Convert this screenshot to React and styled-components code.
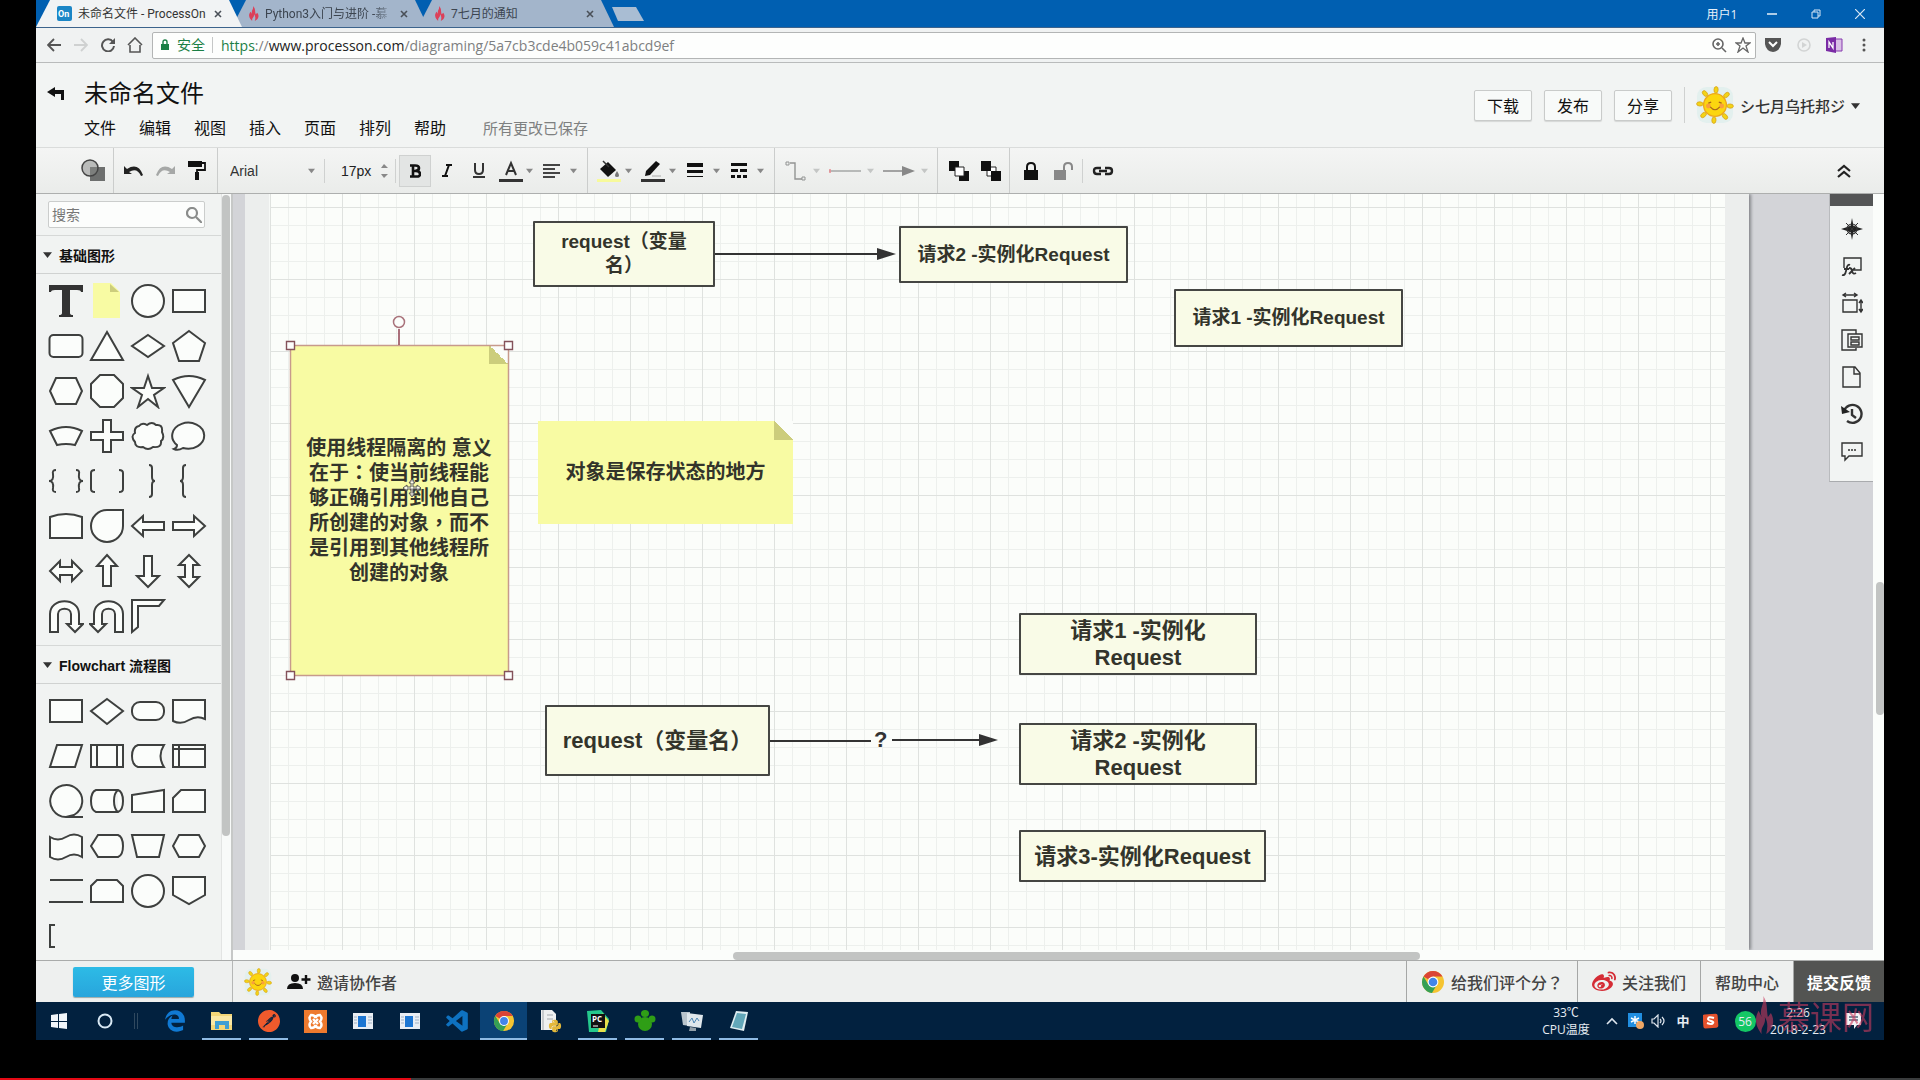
import React from "react";
import styled, { createGlobalStyle } from "styled-components";
import { FaWeibo, FaPython } from "react-icons/fa";
import { FaEdgeLegacy } from "react-icons/fa6";
import { SiPostman, SiXampp } from "react-icons/si";
import { BiLogoVisualStudio } from "react-icons/bi";

const UI = `"Open Sans", "Noto Sans CJK SC", sans-serif`;
const APP = `"Liberation Sans", "Noto Sans CJK SC", sans-serif`;

const Global = createGlobalStyle`
  * { box-sizing: border-box; }
  body { margin: 0; background: #000; font-family: ${APP}; color: #111; overflow: hidden; }
  button, input, select { font: inherit; color: inherit; margin: 0; padding: 0; border: 0; background: none; }
  h1, h2, p { margin: 0; font: inherit; }
  a { color: inherit; text-decoration: none; }
  svg { display: block; flex: none; }
`;

const Screen = styled.div`
  height: 100vh;
  display: flex;
  flex-direction: column;
`;
const Desktop = styled.div`
  flex: 1;
  min-height: 0;
  margin: 0 36px 38px;
  display: flex;
  flex-direction: column;
  background: #f2f4f3;
  position: relative;
`;
const Playback = styled.div`
  height: 2px;
  background: #3a3c3d;
`;
const Played = styled.div`
  height: 2px;
  background: #e50914;
`;

/* browser chrome */
const TitleBar = styled.div`
  height: 28px;
  flex: none;
  display: flex;
  align-items: flex-end;
  background: #005fb1;
  border-bottom: 1px solid #3c638c;
  font-family: ${UI};
`;
const Tab = styled.button`
  width: ${(p) => (p.$active ? 206 : 196)}px;
  height: 27px;
  margin-right: -10px;
  padding: 0 20px 0 ${(p) => (p.$active ? 21 : 16)}px;
  display: flex;
  align-items: center;
  gap: 6px;
  clip-path: polygon(14px 0, calc(100% - 13px) 0, 100% 100%, 0 100%);
  background: ${(p) => (p.$active ? "#f1f3f4" : "#a3b5cb")};
  color: ${(p) => (p.$active ? "#333" : "#3c4550")};
  font-family: Roboto, "Noto Sans CJK SC", sans-serif;
  font-size: 12px;
  line-height: 18px;
  position: relative;
  z-index: ${(p) => (p.$active ? 2 : 1)};
`;
const TabTitle = styled.span`
  flex: 1;
  overflow: hidden;
  white-space: nowrap;
  text-align: left;
  mask-image: ${(p) => (p.$fade ? "linear-gradient(90deg, #000 84%, transparent)" : "none")};
`;
const NewTab = styled.button`
  width: 32px;
  height: 14px;
  margin: 0 0 6px 8px;
  background: #a9bdd3;
  clip-path: polygon(0 0, 24px 0, 100% 100%, 6px 100%);
`;
const WindowButtons = styled.div`
  margin-left: auto;
  align-self: stretch;
  display: flex;
  align-items: center;
  color: #e8f1fa;
  font-size: 12px;
  padding-right: 2px;
`;
const WinButton = styled.button`
  width: ${(p) => p.$w || 44}px;
  height: 26px;
  display: flex;
  align-items: center;
  justify-content: center;
`;
const UrlRow = styled.div`
  height: 35px;
  flex: none;
  display: flex;
  align-items: center;
  padding: 0 4px;
  background: #f0f2f2;
  border-bottom: 1px solid #b9bbbb;
  font-family: ${UI};
`;
const NavButton = styled.button`
  width: ${(p) => p.$w || 27}px;
  height: 28px;
  display: flex;
  align-items: center;
  justify-content: center;
`;
const Omnibox = styled.div`
  flex: 1;
  height: 27px;
  margin: 0 3px 0 4px;
  padding: 0 4px 0 8px;
  display: flex;
  align-items: center;
  gap: 8px;
  background: #fdfefd;
  border: 1px solid #b3b5b5;
  border-radius: 2px;
  font-size: 14px;
  color: #7d8081;
`;
const Secure = styled.span`
  color: #1b7f45;
  padding-right: 7px;
  border-right: 1px solid #c5c7c7;
  line-height: 16px;
`;
const Address = styled.span`
  flex: 1;
  i { font-style: normal; color: #1b7f45; }
  b { font-weight: 400; color: #222; }
`;

/* application header */
const Header = styled.header`
  height: 85px;
  flex: none;
  display: flex;
  align-items: center;
  padding-right: 24px;
  border-bottom: 1px solid #dadcdb;
`;
const BackButton = styled.button`
  width: 40px;
  height: 30px;
  margin: 0 8px 24px 0;
  display: flex;
  align-items: center;
  justify-content: center;
`;
const HeaderText = styled.div`
  flex: 1;
  padding-top: 8px;
  display: flex;
  flex-direction: column;
  gap: 7px;
`;
const DocTitle = styled.h1`
  font-size: 24px;
  line-height: 32px;
`;
const MenuBar = styled.nav`
  display: flex;
  align-items: center;
  gap: 23px;
  font-size: 16px;
  line-height: 24px;
`;
const SaveState = styled.span`
  margin-left: 14px;
  font-size: 15px;
  color: #7e8080;
`;
const HeadButton = styled.button`
  width: 58px;
  height: 31px;
  margin-right: 12px;
  background: #f8faf9;
  border: 1px solid #c9cbca;
  border-radius: 2px;
  box-shadow: 0 1px 1px #d5d7d6;
  font-size: 16px;
`;
const Account = styled.button`
  height: 36px;
  padding-left: 11px;
  display: flex;
  align-items: center;
  gap: 6px;
  border-left: 1px solid #cfd1d0;
  font-size: 15px;
  font-weight: 500;
  color: #333;
`;

/* toolbar */
const ToolBar = styled.div`
  height: 46px;
  flex: none;
  display: flex;
  background: linear-gradient(#f4f5f4, #eaecea);
  border-bottom: 1px solid #adafae;
`;
const ToolGroup = styled.div`
  width: ${(p) => p.$w}px;
  display: flex;
  align-items: center;
  padding-left: ${(p) => p.$pad || 0}px;
  border-right: ${(p) => (p.$last ? 0 : 1)}px solid #cbcdcc;
`;
const Tool = styled.button`
  width: ${(p) => p.$w || 32}px;
  height: 32px;
  display: flex;
  align-items: center;
  justify-content: ${(p) => (p.$drop ? "space-between" : "center")};
  padding-right: ${(p) => (p.$drop ? 5 : 0)}px;
  padding-left: ${(p) => (p.$drop ? 4 : 0)}px;
  background: ${(p) => (p.$on ? "#e3e5e4" : "none")};
  box-shadow: ${(p) => (p.$on ? "inset 0 0 0 1px #cfd1d0" : "none")};
`;
const ToolDivider = styled.i`
  width: 1px;
  height: 24px;
  margin: 0 ${(p) => p.$after || 0}px 0 ${(p) => p.$before || 0}px;
  background: #cfd1d0;
`;
const FontSelect = styled.select`
  appearance: none;
  width: 78px;
  font-size: 14px;
  color: #333;
`;
const SizeInput = styled.input`
  width: 38px;
  font-size: 14px;
  color: #222;
`;
const Collapse = styled.button`
  margin-left: auto;
  width: 80px;
  display: flex;
  align-items: center;
  justify-content: center;
`;

/* body */
const Body = styled.div`
  flex: 1;
  min-height: 0;
  display: flex;
`;
const Side = styled.aside`
  width: 197px;
  flex: none;
  display: flex;
  background: #f1f3f2;
  border-right: 2px solid #c6c8c7;
`;
const SideContent = styled.div`
  flex: 1;
  overflow: hidden;
`;
const Gutter = styled.div`
  width: 10px;
  padding-top: 1px;
  background: #f8faf9;
  border-left: 1px solid #e2e4e3;
`;
const SideThumb = styled.div`
  width: 8px;
  height: 641px;
  border-radius: 4px;
  background: #c2c4c3;
`;
const SearchBox = styled.label`
  height: 27px;
  margin: 7px 16px 7px 12px;
  padding: 0 2px 0 3px;
  display: flex;
  align-items: center;
  background: #fcfdfc;
  border: 1px solid #cbcdcc;
  border-radius: 2px;
  input { flex: 1; min-width: 0; font-size: 14px; color: #666; }
  input::placeholder { color: #777; opacity: 1; }
`;
const Category = styled.button`
  width: 100%;
  height: 39px;
  padding-left: 7px;
  display: flex;
  align-items: center;
  gap: 7px;
  border-top: 1px solid #d6d8d7;
  border-bottom: 1px solid #d0d2d1;
  font-size: 14px;
  font-weight: 700;
`;
const ShapeGrid = styled.div`
  padding: 4px 0 7px 9px;
  display: grid;
  grid-template-columns: repeat(4, 41px);
  grid-auto-rows: 45px;
`;
const ShapeButton = styled.button`
  display: flex;
  align-items: center;
  justify-content: center;
`;
const Stage = styled.main`
  flex: 1;
  min-width: 0;
  display: flex;
  flex-direction: column;
  position: relative;
  background: #fbfdfb;
`;
const StageRow = styled.div`
  flex: 1;
  min-height: 0;
  display: flex;
`;
const Desk = styled.div`
  flex: 1;
  min-width: 0;
  display: flex;
  padding: 0 124px 0 12px;
  background: #d3d4d8;
`;
const Sheet = styled.div`
  flex: 1;
  padding: 0 24px;
  display: flex;
  background: #eceeed;
  box-shadow: 2px 0 3px #85878b;
  clip-path: inset(0 -5px 0 0);
`;
const Paper = styled.div`
  flex: 1;
  position: relative;
  overflow: hidden;
  border-left: 1px solid #f7f9f7;
  background-color: #fbfdfa;
  background-image:
    linear-gradient(90deg, #dfe2df 1px, transparent 1px),
    linear-gradient(#dfe2df 1px, transparent 1px),
    linear-gradient(90deg, #edf0ed 1px, transparent 1px),
    linear-gradient(#edf0ed 1px, transparent 1px);
  background-size: 72px 72px, 72px 72px, 18px 18px, 18px 18px;
  background-position: 0 13px;
`;
const VTrack = styled.div`
  width: 11px;
  padding: 388px 0 0 3px;
`;
const VThumb = styled.div`
  height: 133px;
  width: 8px;
  border-radius: 4px;
  background: #c2c4c3;
`;
const HTrack = styled.div`
  height: 10px;
  padding: 2px 464px 0 500px;
`;
const HThumb = styled.div`
  height: 8px;
  border-radius: 4px;
  background: #c2c4c3;
`;
const Dock = styled.div`
  position: absolute;
  top: 0;
  right: 11px;
  width: 44px;
  height: 288px;
  display: flex;
  flex-direction: column;
  align-items: center;
  background: #f2f4f3;
  border-left: 1px solid #b9bbbe;
  border-bottom: 1px solid #a9abae;
`;
const DockHandle = styled.div`
  width: 100%;
  height: 12px;
  margin-bottom: 4px;
  background: #545556;
`;
const DockButton = styled.button`
  height: 37px;
  width: 100%;
  display: flex;
  align-items: center;
  justify-content: center;
`;

/* diagram */
const Node = styled.div`
  position: absolute;
  left: ${(p) => p.$x}px;
  top: ${(p) => p.$y}px;
  width: ${(p) => p.$w}px;
  height: ${(p) => p.$h}px;
  padding: 0 12px;
  display: flex;
  align-items: center;
  justify-content: center;
  text-align: center;
  font-weight: 700;
  color: #33342b;
`;
const Box = styled(Node)`
  background: #f9fbe7;
  border: 2px solid #454643;
  border-radius: 1px;
  font-size: ${(p) => (p.$big ? 22 : 19)}px;
  line-height: ${(p) => (p.$big ? 27 : 24)}px;
`;
const Note = styled(Node)`
  background: linear-gradient(45deg, transparent 50%, #fbfdfa 50%) top right / 19px 19px no-repeat, #f8fba3;
  font-size: 20px;
  line-height: 25px;
`;
const Fold = styled.i`
  position: absolute;
  top: 0;
  right: 0;
  width: 19px;
  height: 19px;
  background: linear-gradient(45deg, #cccd7c 50%, transparent 50%);
`;
const Connector = styled.svg`
  position: absolute;
  left: ${(p) => p.$x}px;
  top: ${(p) => p.$y}px;
`;
const LinkLabel = styled.span`
  position: absolute;
  left: ${(p) => p.$x}px;
  top: ${(p) => p.$y}px;
  font-size: 22px;
  line-height: 27px;
  font-weight: 700;
  color: #333;
`;
const Wide = styled.span`
  font-family: "Liberation Sans", "Noto Sans CJK TC", sans-serif;
`;

/* footer */
const Footer = styled.footer`
  height: 42px;
  flex: none;
  display: flex;
  background: #eef0ef;
  border-top: 1px solid #a9abaa;
  font-size: 16px;
  font-weight: 500;
  color: #444;
`;
const MoreCell = styled.div`
  width: 197px;
  display: flex;
  align-items: center;
  padding-left: 37px;
  border-right: 1px solid #b5b7b6;
`;
const MoreButton = styled.button`
  width: 121px;
  height: 30px;
  border-radius: 2px;
  background: linear-gradient(#2dbbe6, #28a5dc);
  box-shadow: 0 1px 1px #9aa;
  color: #fff;
  font-weight: 400;
`;
const Invite = styled.button`
  flex: 1;
  display: flex;
  align-items: center;
  padding-left: 11px;
  gap: 5px;
`;
const FooterLink = styled.a`
  padding: 0 ${(p) => p.$pad || 14}px;
  display: flex;
  align-items: center;
  gap: 6px;
  border-left: 1px solid #a5a7a6;
  background: ${(p) => (p.$dark ? "#535452" : "none")};
  color: ${(p) => (p.$dark ? "#fff" : "inherit")};
  font-weight: ${(p) => (p.$dark ? 700 : 500)};
`;

/* taskbar */
const TaskBar = styled.div`
  height: 38px;
  flex: none;
  display: flex;
  align-items: center;
  background: #02213f;
  color: #e6ecf2;
  font-family: ${UI};
  font-size: 12px;
  line-height: 17px;
`;
const Task = styled.button`
  width: ${(p) => p.$w || 47}px;
  height: 38px;
  display: flex;
  align-items: center;
  justify-content: center;
  background: ${(p) => (p.$active ? "#0b4275" : "none")};
  position: relative;
  &::after {
    content: "";
    position: absolute;
    left: ${(p) => (p.$active ? 0 : 4)}px;
    right: ${(p) => (p.$active ? 0 : 4)}px;
    bottom: 0;
    height: ${(p) => (p.$running ? 2 : 0)}px;
    background: #8fbbe4;
  }
`;
const TaskDivider = styled.i`
  width: 4px;
  height: 16px;
  margin: 0 13px 0 6px;
  border: solid #30495f;
  border-width: 0 1px;
`;
const Tray = styled.div`
  margin-left: auto;
  height: 38px;
  display: flex;
  align-items: center;
`;
const TrayCell = styled.div`
  width: ${(p) => p.$w}px;
  font-size: ${(p) => p.$size || 12}px;
  font-weight: ${(p) => (p.$size ? 700 : 400)};
  display: flex;
  flex-direction: column;
  align-items: center;
  justify-content: center;
`;
const Badge = styled.span`
  width: 21px;
  height: 21px;
  border-radius: 50%;
  background: #14c765;
  text-align: center;
  line-height: 21px;
`;
const Watermark = styled.div`
  position: absolute;
  right: 10px;
  bottom: 4px;
  display: flex;
  align-items: center;
  gap: 4px;
  font-family: "Noto Sans CJK SC", sans-serif;
  font-size: 32px;
  line-height: 42px;
  font-weight: 400;
  color: #c93a5e;
  opacity: 0.6;
  pointer-events: none;
`;

/* small drawings */
const Caret = ({ size = 7, color = "#888" }) => (
  <svg width={size} height={size} viewBox="0 0 8 8"><path d="M0 2h8L4 7z" fill={color} /></svg>
);
const Flame = ({ w = 11, h = 15, color = "#dc4059" }) => (
  <svg width={w} height={h} viewBox="0 0 13 18" preserveAspectRatio="none">
    <path d="M6 0c1 4-3 6-1 10l-2-3c-4 5 0 9 2 11-1-4 3-4 2-8 2 2 2 5 1 8 4-2 6-6 3-10-1 1-1 1-2 2C8 6 9 3 6 0z" fill={color} />
  </svg>
);
const Sun = ({ size }) => (
  <svg width={size} height={size} viewBox="0 0 40 40">
    <rect x="1" y="1" width="38" height="38" rx="10" fill="#e3f0ee" />
    {[0, 45, 90, 135, 180, 225, 270, 315].map((a) => (
      <ellipse key={a} cx="20" cy="4" rx="2.2" ry="3.4" fill="#f3d416" stroke="#d8a21c" strokeWidth="0.8" transform={`rotate(${a + 4} 20 20)`} />
    ))}
    <circle cx="20" cy="20" r="12" fill="#fbd60f" stroke="#eda81d" strokeWidth="1.4" />
    <circle cx="13" cy="21" r="2.6" fill="#f9a03c" />
    <circle cx="27" cy="21" r="2.6" fill="#f9a03c" />
    <path d="M13 18l3-1M24 17l3 1M15 22q5 6 10 0" fill="none" stroke="#a8651b" strokeWidth="1.3" />
  </svg>
);
const Chrome = ({ size }) => (
  <svg width={size} height={size} viewBox="0 0 24 24">
    <circle cx="12" cy="12" r="11" fill="#f5c431" />
    <path d="M12 12L2.5 6.5A11 11 0 0 1 21.5 6.5H12z" fill="#da4437" />
    <path d="M2.5 6.5A11 11 0 0 0 11 23l5.5-9.5L12 12 7 14z" fill="#35a055" />
    <circle cx="12" cy="12" r="5.4" fill="#fff" />
    <circle cx="12" cy="12" r="4.3" fill="#4285e8" />
  </svg>
);
const Ink = ({ w = 18, h = 18, box, children, ...rest }) => (
  <svg width={w} height={h} viewBox={box || `0 0 ${w} ${h}`} fill="none" stroke="#222" strokeWidth="1.6" {...rest}>{children}</svg>
);
const CloseMark = () => (
  <Ink w={8} h={8} stroke="#4a5058"><path d="M1 1l6 6M7 1L1 7" /></Ink>
);

const basicShapes = [
  <path fill="#333" stroke="none" d="M1 2h34v7h-2q0-2-4-2h-7v23q0 2 3 2v2H11v-2q3 0 3-2V7H7Q3 7 3 9H1z" />,
  <g stroke="none"><path fill="#f8fba3" d="M4 0h18l9 9v26H4z" /><path fill="#cccd7c" d="M21 1v8h9z" /></g>,
  <circle cx="18" cy="18" r="16" />,
  <path d="M2 7h32v22H2z" />,
  <rect x="1.5" y="7" width="33" height="22" rx="4" />,
  <path d="M18 4l16 28H2z" />,
  <path d="M18 7l16 11-16 11L2 18z" />,
  <path d="M18 3l16 12-6 18H8L2 15z" />,
  <path d="M8 5h20l6 13-6 13H8L2 18z" />,
  <path d="M11 2h14l9 9v14l-9 9H11l-9-9V11z" />,
  <path d="M18 3l4 12h12l-10 7 4 12-10-8-10 8 4-12-10-7h12z" />,
  <path d="M2 7q16-8 32 0L18 34z" />,
  <path d="M2 13q16-8 32 0l-7 14q-9-2-18 0z" />,
  <path d="M14 2h8v12h12v8H22v12h-8V22H2v-8h12z" />,
  <path d="M9 8q3-4 8-1 5-4 9 0 7-1 6 7 3 6-1 9 1 7-8 6-5 4-10 0-8 1-8-5-5-6 0-9-1-6 4-7z" />,
  <path d="M6 27A16 13 0 1 1 12 30Q7 33 3 31 6 30 6 27z" />,
  <path fill="none" d="M8 7q-4 0-3 4 1 7-4 7 5 0 4 7-1 4 3 4M28 7q4 0 3 4-1 7 4 7-5 0-4 7 1 4-3 4" />,
  <path fill="none" d="M6 7q-4 0-4 3v16q0 3 4 3M30 7q4 0 4 3v16q0 3-4 3" />,
  <path fill="none" d="M19 2q3 0 3 3v9q0 4 3 4-3 0-3 4v9q0 3-3 3" />,
  <path fill="none" d="M15 2q-3 0-3 3v9q0 4-3 4 3 0 3 4v9q0 3 3 3" />,
  <path d="M2 30V9q16-6 32 0v21z" />,
  <path d="M34 2v16A16 16 0 1 1 18 2z" />,
  <path d="M2 18L13 8v6h21v8H13v6z" />,
  <path d="M34 18L23 8v6H2v8h21v6z" />,
  <path d="M2 18L12 8v6h12V8l10 10-10 10v-6H12v6z" />,
  <path d="M18 2l10 11h-6v20h-8V13H8z" />,
  <path d="M18 34L7 23h7V3h8v20h7z" />,
  <path d="M18 2l10 10h-6v12h6L18 34 8 24h6V12H8z" />,
  <path d="M2 34V16C2-1 31-1 31 16v10h4l-8 8-8-8h4V16c0-7-13-7-13 0v18z" />,
  <path d="M34 34V16C34-1 5-1 5 16v10H1l8 8 8-8h-4V16c0-7 13-7 13 0v18z" />,
  <path d="M2 34V2h32l-5 6H8v21z" />,
];
const flowShapes = [
  <path d="M2 7h32v22H2z" />,
  <path d="M18 6l16 12-16 13L2 18z" />,
  <rect x="2" y="9" width="32" height="18" rx="8" />,
  <path d="M2 7h32v19q-8-4-16 1T2 28z" />,
  <path d="M9 7h25l-7 22H2z" />,
  <path d="M2 7h32v22H2zM8 7v22M28 7v22" />,
  <path d="M8 7h26q-7 11 0 22H8Q2 27 2 18T8 7z" />,
  <path d="M2 7h32v22H2zM2 11h32M8 7v22" />,
  <path d="M18 34A16 16 0 1 1 26 32l-8 2h17" />,
  <path d="M7 7h22q5 2 5 11t-5 11H7q-5-2-5-11T7 7zM29 7q-4 3-4 11t4 11" />,
  <path d="M2 12L34 7v22H2z" />,
  <path d="M10 7h24v22H2V15z" />,
  <path d="M2 9q8 5 16 0t16 0v20q-8-5-16 0t-16 0z" />,
  <path d="M9 7h20q5 2 5 11t-5 11H9L2 18z" />,
  <path d="M2 7h32l-5 22H7z" />,
  <path d="M8 7h20l6 11-6 11H8L2 18z" />,
  <path fill="none" d="M2 7h33M1 29h34" />,
  <path d="M8 7h20l6 6v16H2V13z" />,
  <circle cx="18" cy="18" r="16" />,
  <path d="M2 4h32v18l-16 9-16-9z" />,
  <path fill="none" d="M7 7H2v22h5" />,
];

const Shapes = ({ items, name }) => (
  <ShapeGrid>
    {items.map((s, i) => (
      <ShapeButton key={i} aria-label={`${name} ${i + 1}`}>
        <svg width="36" height="36" viewBox="0 0 36 36" fill="#fbfdfb" stroke="#3e403f" strokeWidth="2">{s}</svg>
      </ShapeButton>
    ))}
  </ShapeGrid>
);

/* full-width marks sit in the middle of their cell */
const Label = ({ text }) => (
  <span>
    {text.split(/([（），：？])/).map((t, i) => (/[（），：？]/.test(t) ? <Wide key={i}>{t}</Wide> : t))}
  </span>
);

const boxes = [
  { x: 263, y: 27, w: 182, h: 66, text: "request（变量名）" },
  { x: 629, y: 32, w: 229, h: 57, text: "请求2 -实例化Request" },
  { x: 904, y: 95, w: 229, h: 58, text: "请求1 -实例化Request" },
  { x: 275, y: 511, w: 225, h: 71, big: true, text: "request（变量名）" },
  { x: 749, y: 419, w: 238, h: 62, big: true, text: "请求1 -实例化Request" },
  { x: 749, y: 529, w: 238, h: 62, big: true, text: "请求2 -实例化Request" },
  { x: 749, y: 636, w: 247, h: 52, big: true, text: "请求3-实例化Request" },
];

const dockIcons = [
  <g><path fill="#222" stroke="none" d="M11 0l1.5 8 9.5 3-9.5 3-1.5 8-1.5-8L0 11l9.5-3z" /><circle cx="11" cy="11" r="5" strokeWidth="1.2" /><path d="M5 5l12 12M17 5L5 17" strokeWidth="1" /></g>,
  <g><path d="M3 13V3h17v12h-7" /><path d="M1 20q3 1 4-4l1-4q1-3 3-2M3 14h5M8 13q3 0 3 3 1 4 4 2M14 13l-6 6" strokeWidth="1.8" /></g>,
  <g><path d="M2 8h14v12H2zM2 3h14M5 1L2 3l3 2M13 1l3 2-3 2M20 8v12M18 11l2-3 2 3M18 17l2 3 2-3" /></g>,
  <g><path d="M7 21H1V1h14v4M7 21h8v-2" /><path d="M7 5h14v13H7zM10 8h8v3h-8zM10 13h8v3h-8z" /></g>,
  <g><path d="M2 1h12l5 6v14H2zM13 1v7h6" /></g>,
  <g><path d="M3 8A9 9 0 1 1 6 18M11 6v6l4 3" strokeWidth="2.4" /><path fill="#222" stroke="none" d="M0 3l1 8 8-2z" /></g>,
  <g><path d="M1 3h20v13H8l-4 4v-4H1zM7 10h2M10 10h2M13 10h2" /></g>,
];

const SmallApp = () => (
  <svg width="20" height="16" viewBox="0 0 20 16">
    <path fill="#e9eef4" d="M0 0h20v16H0z" /><path fill="#1d76d2" d="M5 3h8v11H5z" /><path stroke="#9fb1c4" d="M1 4h3M1 7h3M1 10h3M15 4h4M15 7h4M15 10h4" />
  </svg>
);

const tasks = [
  { name: "Edge", icon: <FaEdgeLegacy size={22} color="#1079d3" /> },
  { name: "文件", running: true, icon: <svg width="22" height="20" viewBox="0 0 22 20"><path fill="#f3d678" d="M0 1h8l2 2h11v16H0z" /><path fill="#fbe8a4" d="M0 5h21v9H0z" /><path fill="#3e9fd4" d="M4 18v-8h14v8h-4v-4H8v4z" /></svg> },
  { name: "Postman", running: true, icon: <SiPostman size={22} color="#ef5a2c" /> },
  { name: "XAMPP", icon: <svg width="23" height="23" viewBox="0 0 23 23"><path fill="#ee7a2e" d="M0 0h23v23H0z" /><path d="M7 5q4 0 4.5 3Q12 5 16 5q3 3 0 6.500 3 3.500 0 6.500-4 0-4.500-3-.5 3-4.500 3-3-3 0-6.500Q4 8 7 5zM9 9l5 5M14 9l-5 5" fill="none" stroke="#fff" strokeWidth="2.4" /></svg> },
  { name: "窗口 1", icon: <SmallApp /> },
  { name: "窗口 2", icon: <SmallApp /> },
  { name: "Code", icon: <BiLogoVisualStudio size={26} color="#0e72c1" /> },
  { name: "Chrome", running: true, active: true, icon: <Chrome size={22} /> },
  { name: "Python", icon: <svg width="24" height="24" viewBox="0 0 24 24"><path fill="#eef0f1" d="M2 1h11l4 4v16H2z" /><path stroke="#a2a8ad" d="M4 1v20M8 6h6M8 10h6" /><svg x="9" y="10" width="14" height="14"><FaPython size={14} color="#e3b83a" /></svg></svg> },
  { name: "PyCharm", running: true, icon: <svg width="24" height="24" viewBox="0 0 24 24"><path fill="#25c98d" d="M1 2l14-1 8 9-3 13H3z" /><path fill="#e8e04a" d="M16 4l7 8-4 11h-7z" /><path fill="#111" d="M5 5h14v14H5z" /><text x="6" y="13" fontSize="8" fontWeight="700" fill="#fff">PC</text><path stroke="#fff" d="M7 17h5" /></svg> },
  { name: "Clover", running: true, icon: <svg width="22" height="22" viewBox="0 0 22 22" fill="#2f9e16"><circle cx="11" cy="14" r="7" /><circle cx="4" cy="9" r="3.5" /><circle cx="18" cy="9" r="3.5" /><ellipse cx="11" cy="3.5" rx="4" ry="3.5" /></svg> },
  { name: "监视器", running: true, icon: <svg width="24" height="22" viewBox="0 0 24 22"><path fill="#b9c4cc" d="M1 2l9 0v14l-7-1z" /><path fill="#dfe7ec" d="M7 3l16 2-2 13-14-2z" /><path fill="none" stroke="#4c86b4" d="M9 12l3-4 2 5 3-5 2 3" /><path fill="#929fa9" d="M10 17l6 1v3h-7z" /></svg> },
  { name: "记事本", running: true, icon: <svg width="20" height="22" viewBox="0 0 20 22"><path fill="#dfeef2" d="M7 1l12 1-4 19L1 18z" /><path fill="#62a7b9" d="M8 3l9 1-4 15L3 17z" /></svg> },
];

export default function App() {
  return (
    <Screen>
      <Global />
      <Desktop>
        <TitleBar>
          <Tab $active>
            <svg width="15" height="15" viewBox="0 0 15 15"><rect width="15" height="15" rx="2" fill="#1b86c6" /><text x="1" y="11" fontSize="9" fontWeight="700" fill="#fff">On</text></svg>
            <TabTitle>未命名文件 - ProcessOn</TabTitle>
            <CloseMark />
          </Tab>
          <Tab>
            <Flame />
            <TabTitle $fade>Python3入门与进阶 -慕</TabTitle>
            <CloseMark />
          </Tab>
          <Tab>
            <Flame />
            <TabTitle>7七月的通知</TabTitle>
            <CloseMark />
          </Tab>
          <NewTab aria-label="新标签页" />
          <WindowButtons>
            <WinButton $w={56}>用户1</WinButton>
            <WinButton aria-label="最小化"><Ink w={10} h={10} stroke="#d9e8f6"><path d="M0 5h10" /></Ink></WinButton>
            <WinButton aria-label="还原"><Ink w={10} h={10} stroke="#d9e8f6" strokeWidth="1"><path d="M1 3h6v6H1zM3 3V1h6v6H7" /></Ink></WinButton>
            <WinButton aria-label="关闭"><Ink w={10} h={10} stroke="#d9e8f6" strokeWidth="1.2"><path d="M0 0l10 10M10 0L0 10" /></Ink></WinButton>
          </WindowButtons>
        </TitleBar>

        <UrlRow>
          <NavButton aria-label="后退"><Ink w={14} h={14} stroke="#555" strokeWidth="1.8"><path d="M14 7H2M7 1L1 7l6 6" /></Ink></NavButton>
          <NavButton aria-label="前进"><Ink w={14} h={14} stroke="#cfd1d1" strokeWidth="1.8"><path d="M0 7h12M7 1l6 6-6 6" /></Ink></NavButton>
          <NavButton aria-label="刷新"><Ink w={14} h={14} stroke="#555" strokeWidth="2"><path d="M12 4a6 6 0 1 0 1 4" /><path d="M14 0v6H8z" fill="#555" stroke="none" /></Ink></NavButton>
          <NavButton aria-label="主页"><Ink w={16} h={16} stroke="#555"><path d="M3 8v7h10V8M1 8l7-7 7 7" /></Ink></NavButton>
          <Omnibox>
            <svg width="8" height="12" viewBox="0 0 8 12"><path d="M0 5h8v6H0z" fill="#1b7f45" /><path d="M2 5V3q0-2 2-2t2 2v2" fill="none" stroke="#1b7f45" strokeWidth="1.4" /></svg>
            <Secure>安全</Secure>
            <Address><i>https</i>://<b>www.processon.com</b>/diagraming/5a7cb3cde4b059c41abcd9ef</Address>
            <Ink w={16} h={16} stroke="#666"><circle cx="7" cy="7" r="5" /><path d="M11 11l4 4M5 7h4M7 5v4" /></Ink>
            <Ink w={16} h={16} stroke="#666" strokeWidth="1.3"><path d="M8 1l2 5h5l-4 3 2 6-5-4-5 4 2-6-4-3h5z" /></Ink>
          </Omnibox>
          <NavButton aria-label="Pocket"><svg width="16" height="14" viewBox="0 0 16 14"><path d="M0 0h16v6q-1 7-8 8-7-1-8-8z" fill="#555" /><path d="M4 4l4 4 4-4" fill="none" stroke="#fff" strokeWidth="2" /></svg></NavButton>
          <NavButton $w={35} aria-label="播放"><Ink w={14} h={14} stroke="#d2d4d4"><circle cx="7" cy="7" r="6" /><path d="M5 4l5 3-5 3z" fill="#d2d4d4" stroke="none" /></Ink></NavButton>
          <NavButton aria-label="OneNote"><svg width="17" height="16" viewBox="0 0 17 16"><path d="M8 2h8v12H8z" fill="#d9bfe6" stroke="#8639ae" /><path d="M0 1l10-1v16L0 14z" fill="#7a2ba5" /><path d="M3 11V5l4 6V5" fill="none" stroke="#fff" strokeWidth="1.3" /></svg></NavButton>
          <NavButton $w={32} aria-label="菜单"><svg width="4" height="14" viewBox="0 0 4 14" fill="#555"><circle cx="2" cy="2" r="1.5" /><circle cx="2" cy="7" r="1.5" /><circle cx="2" cy="12" r="1.5" /></svg></NavButton>
        </UrlRow>

        <Header>
          <BackButton aria-label="返回"><svg width="18" height="13" viewBox="0 0 18 13"><path d="M0 5l8-5v3h9v10h-3V7H8v3z" fill="#111" /></svg></BackButton>
          <HeaderText>
            <DocTitle>未命名文件</DocTitle>
            <MenuBar>
              {["文件", "编辑", "视图", "插入", "页面", "排列", "帮助"].map((m) => <button key={m}>{m}</button>)}
              <SaveState>所有更改已保存</SaveState>
            </MenuBar>
          </HeaderText>
          <HeadButton>下载</HeadButton>
          <HeadButton>发布</HeadButton>
          <HeadButton>分享</HeadButton>
          <Account><Sun size={38} />シ七月乌托邦ジ<Caret size={9} color="#333" /></Account>
        </Header>

        <ToolBar>
          <ToolGroup $w={78} $pad={41}>
            <Tool aria-label="图形"><svg width="25" height="23" viewBox="0 0 25 23"><path d="M9 8h15v14H9z" fill="#6d6f6e" /><circle cx="9" cy="9" r="8" fill="#8a8c8b88" stroke="#444" strokeWidth="1.5" /></svg></Tool>
          </ToolGroup>
          <ToolGroup $w={104} $pad={3}>
            <Tool aria-label="撤销"><svg width="19" height="12" viewBox="0 0 19 12"><path d="M0 1v8h8L5 7q8-5 12 4 1 0 2-1Q14-3 3 4z" fill="#222" /></svg></Tool>
            <Tool aria-label="恢复"><svg width="19" height="12" viewBox="0 0 19 12"><path d="M19 1v8h-8l3-2Q6 2 2 11q-1 0-2-1Q5-3 16 4z" fill="#a6a8a7" /></svg></Tool>
            <Tool aria-label="格式刷"><svg width="18" height="19" viewBox="0 0 18 19"><path d="M0 0h14v6H0z" fill="#111" /><path d="M14 2h3v7H9v3" fill="none" stroke="#111" strokeWidth="1.8" /><path d="M7 11h4v8H7z" fill="#111" /></svg></Tool>
          </ToolGroup>
          <ToolGroup $w={370} $pad={12}>
            <FontSelect aria-label="字体" defaultValue="Arial"><option>Arial</option></FontSelect>
            <Caret />
            <ToolDivider $before={9} $after={16} />
            <SizeInput aria-label="字号" defaultValue="17px" />
            <Tool $w={10} aria-label="调整字号"><svg width="7" height="16" viewBox="0 0 7 16" fill="#888"><path d="M0 5h7L3 1zM0 11h7l-4 4z" /></svg></Tool>
            <ToolDivider $before={6} $after={3} />
            <Tool $on aria-label="加粗"><Ink w={12} h={14} stroke="#111"><path d="M1 1.5h5q4 0 4 2.5T6 7h-3 4q4 0 4 3t-4 2.5H1M4 1v12" strokeWidth="2.6" /></Ink></Tool>
            <Tool aria-label="斜体"><Ink w={12} h={13} stroke="#111" strokeWidth="2"><path d="M5 1h6M1 12h6M8 1L4 12" /></Ink></Tool>
            <Tool aria-label="下划线"><Ink w={12} h={15} stroke="#333" strokeWidth="2"><path d="M2 0v7q0 4 4 4t4-4V0M0 14h12" /></Ink></Tool>
            <Tool $w={43} $drop aria-label="文字颜色"><Ink w={24} h={22} stroke="#333" strokeWidth="2"><path d="M7 15l5-12 5 12M9 11h6" /><path d="M0 20.5h24" strokeWidth="3" /></Ink><Caret /></Tool>
            <Tool $w={44} $drop aria-label="对齐"><Ink w={20} h={14} stroke="#444" strokeWidth="2"><path d="M1 1h17M1 5h12M1 9h17M1 13h12" /></Ink><Caret /></Tool>
          </ToolGroup>
          <ToolGroup $w={187} $pad={5}>
            <Tool $w={44} $drop aria-label="填充"><svg width="24" height="24" viewBox="0 0 24 24"><path d="M3 10l8-7 8 8-8 7z" fill="#111" /><path d="M6 2l6 6" stroke="#333" strokeWidth="1.5" /><path d="M20 12q4 6 0 6t0-6z" fill="#777" /><path d="M0 20h24v3H0z" fill="#f7fa9b" /></svg><Caret /></Tool>
            <Tool $w={44} $drop aria-label="线条颜色"><svg width="24" height="24" viewBox="0 0 24 24"><path d="M4 17l1-5L15 2l4 3L9 16z" fill="#111" /><path d="M11 17h9" stroke="#aaa" /><path d="M0 20h24v3H0z" fill="#333" /></svg><Caret /></Tool>
            <Tool $w={44} $drop aria-label="线宽"><svg width="20" height="16" viewBox="0 0 20 16" fill="#111"><path d="M2 0h16v4H2zM2 7h16v3H2zM2 13h16v1H2z" /></svg><Caret /></Tool>
            <Tool $w={44} $drop aria-label="线型"><svg width="20" height="16" viewBox="0 0 20 16" fill="#111"><path d="M2 0h16v3H2zM2 6h7v3H2zM11 6h7v3h-7zM2 12h4v3H2zM8 12h4v3H8zM14 12h4v3h-4z" /></svg><Caret /></Tool>
          </ToolGroup>
          <ToolGroup $w={163} $pad={6}>
            <Tool $w={44} $drop aria-label="连线类型"><Ink w={22} h={20} stroke="#929493" strokeWidth="1.4"><path d="M5 2h5v16h7" /><path d="M1 1h3v3H1zM17 16h3v3h-3z" strokeWidth="1" /></Ink><Caret color="#c4c6c5" /></Tool>
            <Tool $w={54} $drop aria-label="连线样式"><Ink w={32} h={6} stroke="#a5a7a6" strokeWidth="1.5"><path d="M0 3h32" /><path d="M1 1v4" stroke="#e98c92" /></Ink><Caret color="#c4c6c5" /></Tool>
            <Tool $w={54} $drop aria-label="箭头"><Ink w={32} h={12} stroke="#888" strokeWidth="1.5"><path d="M0 6h20" /><path d="M19 1l13 5-13 5z" fill="#888" stroke="none" /></Ink><Caret color="#c4c6c5" /></Tool>
          </ToolGroup>
          <ToolGroup $w={72} $pad={5}>
            <Tool aria-label="置于顶层"><svg width="20" height="20" viewBox="0 0 20 20" fill="#111"><path d="M0 0h10v10H0zM10 10h10v10H10z" /><path d="M6 6h9v9H6z" fill="#fff" stroke="#222" /></svg></Tool>
            <Tool aria-label="置于底层"><svg width="20" height="20" viewBox="0 0 20 20" fill="#111"><path d="M6 6h9v9H6z" fill="#fff" stroke="#222" /><path d="M0 0h10v10H0zM10 10h10v10H10z" /></svg></Tool>
          </ToolGroup>
          <ToolGroup $w={124} $pad={5} $last>
            <Tool aria-label="锁定"><svg width="14" height="18" viewBox="0 0 14 18"><path d="M0 8h14v10H0z" fill="#111" /><path d="M3 8V5q0-4 4-4t4 4v3" fill="none" stroke="#111" strokeWidth="2" /></svg></Tool>
            <Tool aria-label="解锁"><svg width="19" height="18" viewBox="0 0 19 18"><path d="M0 8h12v10H0z" fill="#888" /><path d="M10 8V5q0-4 4-4t4 4v3" fill="none" stroke="#888" strokeWidth="2" /></svg></Tool>
            <ToolDivider $before={3} />
            <Tool $w={40} aria-label="链接"><Ink w={22} h={10} stroke="#222" strokeWidth="2.4"><path d="M9 2H5Q2 2 2 5t3 3h4M13 2h4q3 0 3 3t-3 3h-4M7 5h8" /></Ink></Tool>
          </ToolGroup>
          <Collapse aria-label="收起"><Ink w={14} h={14} stroke="#222" strokeWidth="2.2"><path d="M1 7l6-5 6 5M1 13l6-5 6 5" /></Ink></Collapse>
        </ToolBar>

        <Body>
          <Side>
            <SideContent>
              <SearchBox>
                <input placeholder="搜索" aria-label="搜索" />
                <Ink w={16} h={16} stroke="#8a8c8b" strokeWidth="2.2"><circle cx="6" cy="6" r="5" /><path d="M10 10l6 6" /></Ink>
              </SearchBox>
              <Category><Caret size={9} color="#333" />基础图形</Category>
              <Shapes items={basicShapes} name="基础图形" />
              <Category><Caret size={9} color="#333" />Flowchart 流程图</Category>
              <Shapes items={flowShapes} name="流程图" />
            </SideContent>
            <Gutter><SideThumb /></Gutter>
          </Side>

          <Stage>
            <StageRow>
              <Desk>
                <Sheet>
                  <Paper>
                    {boxes.map((b, i) => (
                      <Box key={i} $x={b.x} $y={b.y} $w={b.w} $h={b.h} $big={b.big}><Label text={b.text} /></Box>
                    ))}
                    <Connector $x={445} $y={52} width="182" height="16"><path d="M0 8h164" stroke="#333" strokeWidth="2" /><path d="M162 2l19 6-19 6z" fill="#333" /></Connector>
                    <Connector $x={500} $y={537} width="230" height="18"><path d="M0 10h101M122 9h90" stroke="#333" strokeWidth="2" /><path d="M209 3l19 6-19 6z" fill="#333" /></Connector>
                    <LinkLabel $x={604} $y={532}>?</LinkLabel>
                    <Note $x={268} $y={227} $w={255} $h={103}><Fold />对象是保存状态的地方</Note>
                    <Note $x={20} $y={151} $w={218} $h={331}><Fold /><Label text="使用线程隔离的 意义在于：使当前线程能够正确引用到他自己所创建的对象，而不是引用到其他线程所创建的对象" /></Note>
                    <Connector $x={14} $y={120} width="230" height="368" fill="none" stroke="#a9737b">
                      <path d="M6.5 31.5h218v330H6.5z" stroke="#c79a8c" strokeWidth="1.5" />
                      <path d="M115 15v16" stroke="#8f4150" strokeWidth="1.5" />
                      <circle cx="115" cy="8" r="5.5" fill="#fbfdfa" strokeWidth="1.5" />
                      <g fill="#fdfefd" stroke="#84525a" strokeWidth="1.4">
                        <path d="M2.5 27.5h8v8h-8zM220.5 27.5h8v8h-8zM2.5 357.5h8v8h-8zM220.5 357.5h8v8h-8z" />
                      </g>
                    </Connector>
                    <Connector $x={132} $y={284} width="20" height="20" fill="#fffb" stroke="#555"><path d="M10 1l3 4h-2v4h4V7l4 3-4 3v-2h-4v4h2l-3 4-3-4h2v-4H5v2l-4-3 4-3v2h4V5H7z" /></Connector>
                  </Paper>
                </Sheet>
              </Desk>
              <VTrack><VThumb /></VTrack>
            </StageRow>
            <HTrack><HThumb /></HTrack>
            <Dock>
              <DockHandle />
              {dockIcons.map((d, i) => (
                <DockButton key={i} aria-label={`面板 ${i + 1}`}><Ink w={22} h={22} strokeWidth="1.4" stroke="#333">{d}</Ink></DockButton>
              ))}
            </Dock>
          </Stage>
        </Body>

        <Footer>
          <MoreCell><MoreButton>更多图形</MoreButton></MoreCell>
          <Invite>
            <Sun size={28} />
            <svg width="35" height="18" viewBox="-11 0 35 18" fill="#111"><circle cx="7" cy="5" r="4" /><path d="M-1 16q0-6 8-6t8 6z" /><path d="M18 2v9M13.5 6.5h9" stroke="#111" strokeWidth="2.4" /></svg>
            邀请协作者
          </Invite>
          <FooterLink href="#rate"><Chrome size={24} /><Label text="给我们评个分？" /></FooterLink>
          <FooterLink href="#follow"><FaWeibo size={24} color="#d52c35" />关注我们</FooterLink>
          <FooterLink href="#help">帮助中心</FooterLink>
          <FooterLink href="#feedback" $dark $pad={13}>提交反馈</FooterLink>
        </Footer>

        <TaskBar>
          <Task $w={46} aria-label="开始"><svg width="16" height="16" viewBox="0 0 16 16" fill="#f2f6fa"><path d="M0 2l7-1v7H0zM8 1l8-1v8H8zM0 9h7v6l-7-1zM8 9h8v7l-8-1z" /></svg></Task>
          <Task $w={46} aria-label="Cortana"><Ink w={16} h={16} stroke="#d8e8f4" strokeWidth="2"><circle cx="8" cy="8" r="6.5" /></Ink></Task>
          <TaskDivider />
          {tasks.map((t) => <Task key={t.name} $running={t.running} $active={t.active} aria-label={t.name}>{t.icon}</Task>)}
          <Tray>
            <TrayCell $w={66}><span>33℃</span><span>CPU温度</span></TrayCell>
            <TrayCell $w={26}><Ink w={12} h={8} stroke="#dfe6ee"><path d="M1 7l5-5 5 5" /></Ink></TrayCell>
            <TrayCell $w={22}><svg width="16" height="16" viewBox="0 0 16 16"><rect width="14" height="14" fill="#218ee0" /><path d="M7 3v8M3 5l8 4M11 5L3 9" stroke="#fff" strokeWidth="1.5" /><circle cx="12" cy="12" r="4" fill="#f0a765" /></svg></TrayCell>
            <TrayCell $w={24}><Ink w={16} h={14} stroke="#dfe6ee" strokeWidth="1.2"><path d="M1 5h2l4-4v12L3 9H1zM9 5q2 2 0 4M11 3q4 4 0 8" /></Ink></TrayCell>
            <TrayCell $w={24} $size={13}>中</TrayCell>
            <TrayCell $w={32}><svg width="16" height="16" viewBox="0 0 16 16"><rect y="1" width="15" height="14" rx="2" fill="#e4512c" transform="rotate(-4 8 8)" /><path d="M11 5q-6-2-6 1 0 1 3 2t2 2q-1 2-6 0" fill="none" stroke="#fff" strokeWidth="2" /></svg></TrayCell>
            <TrayCell $w={36}><Badge>56</Badge></TrayCell>
            <TrayCell $w={70}><span>2:26</span><span>2018-2-23</span></TrayCell>
            <TrayCell $w={42}><svg width="16" height="16" viewBox="0 0 16 16"><path d="M0 0h15v12h-4l-3 4v-4H0z" fill="#f1f4f7" /><path d="M3 4h9M3 7h9" stroke="#02213f" /></svg></TrayCell>
            <TrayCell $w={9} />
          </Tray>
        </TaskBar>
        <Watermark><Flame w={20} h={38} color="#c93a5e" />慕课网</Watermark>
      </Desktop>
      <Playback><Played style={{ width: `${(411 / 1920) * 100}%` }} /></Playback>
    </Screen>
  );
}
